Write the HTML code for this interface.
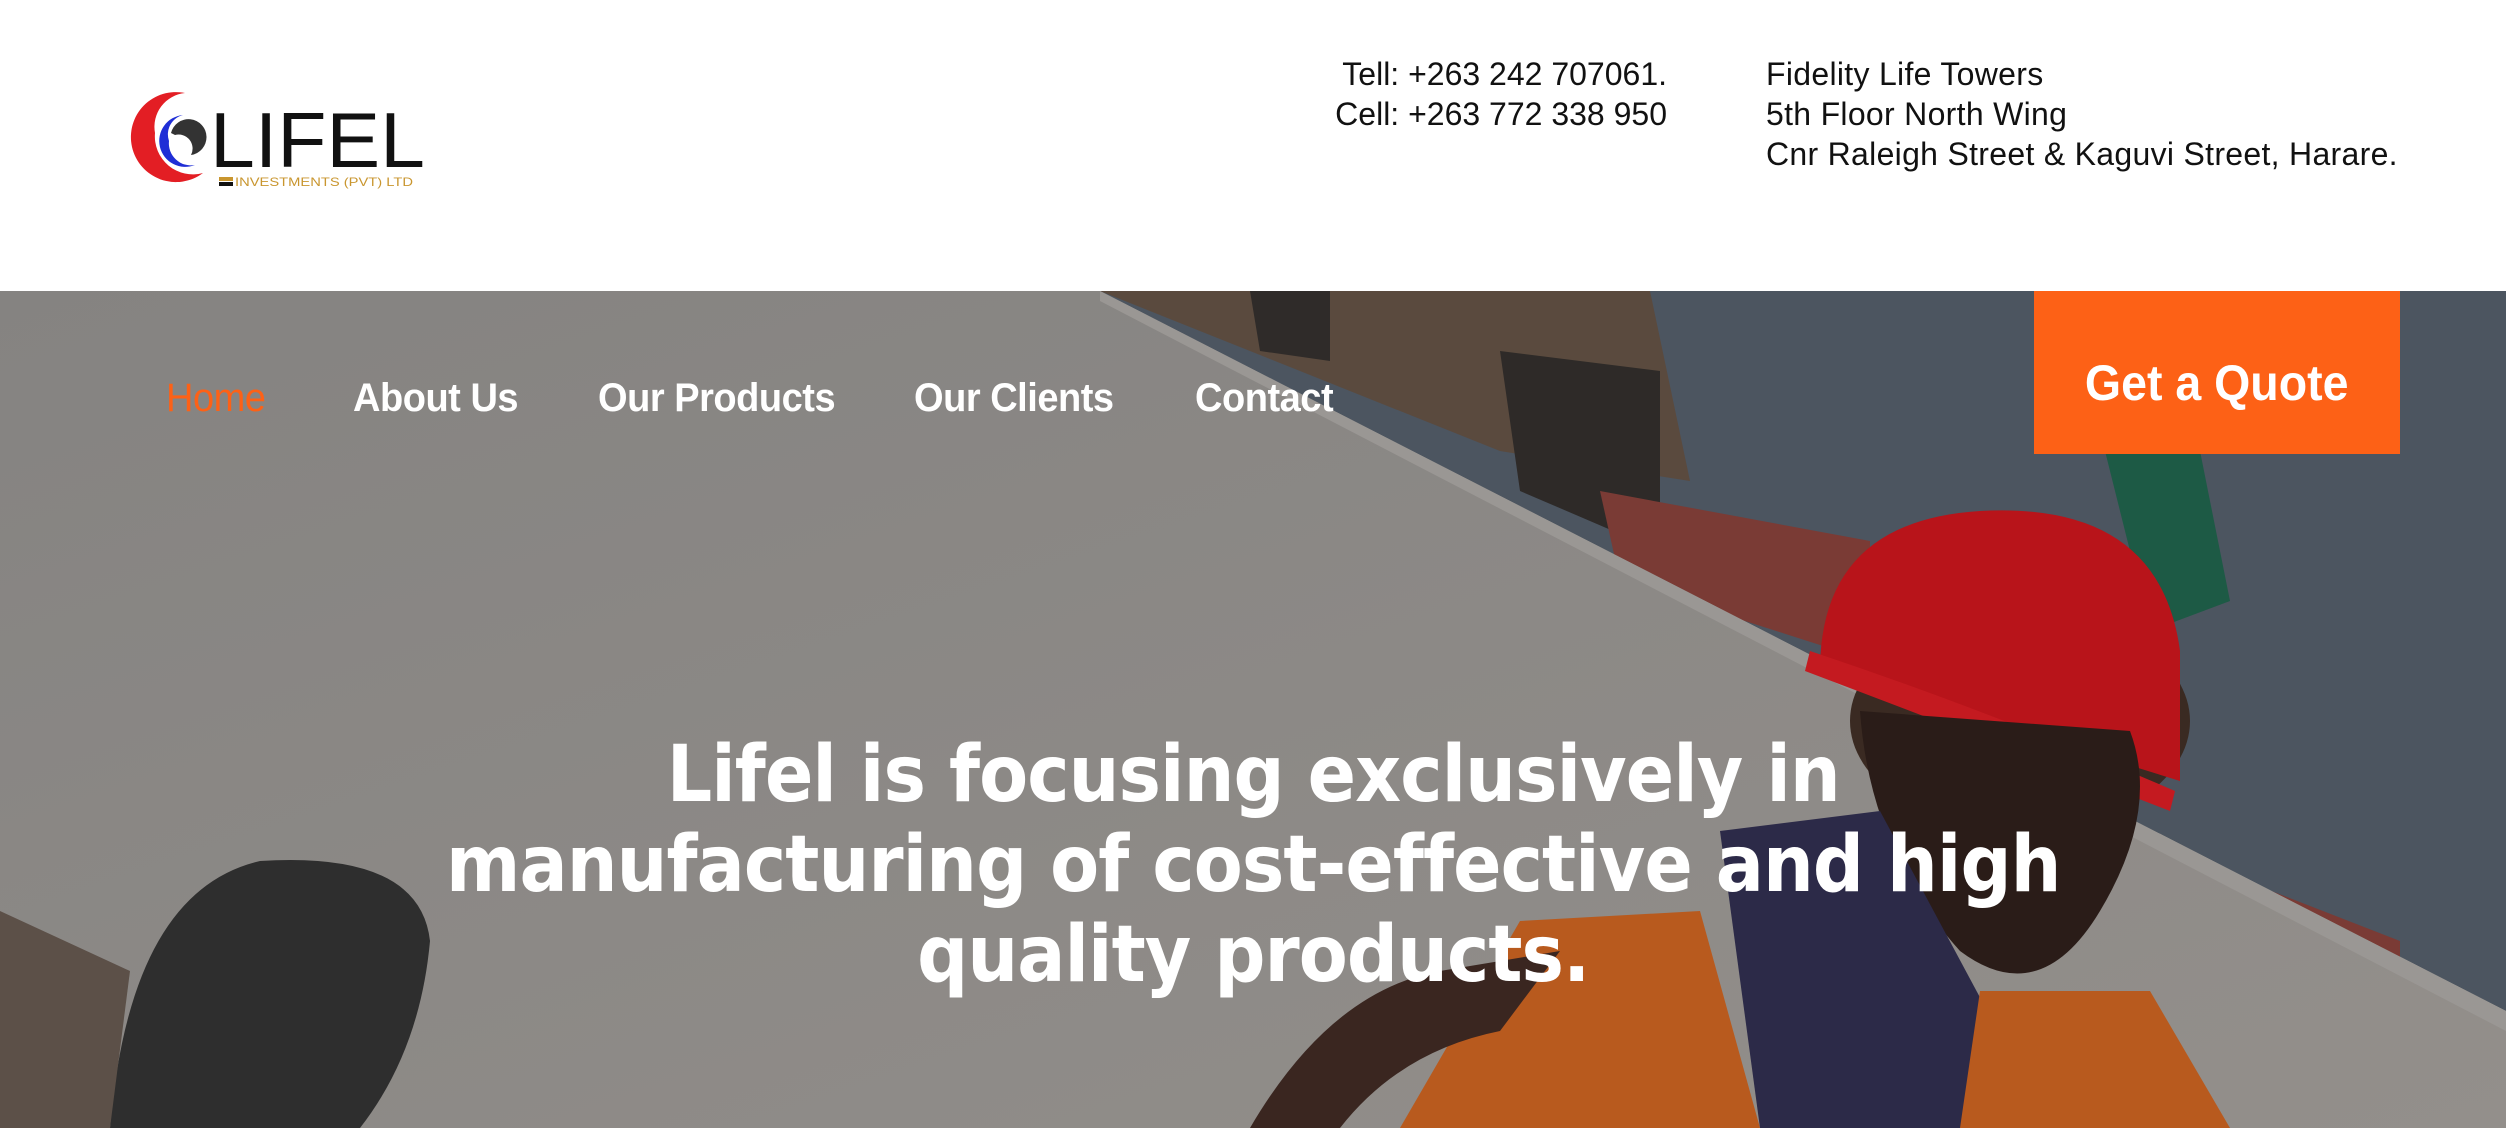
<!DOCTYPE html>
<html><head><meta charset="utf-8"><style>
*{margin:0;padding:0;box-sizing:border-box}
body{width:2506px;height:1128px;overflow:hidden;background:#fff;font-family:"Liberation Sans",sans-serif;position:relative}
.hdr{position:absolute;left:0;top:0;width:2506px;height:291px;background:#fff}
.c1{position:absolute;left:1200px;top:54px;width:467px;text-align:right;font-size:32px;line-height:40px;color:#111;white-space:nowrap}
.c2{position:absolute;left:1766px;top:54px;font-size:32px;line-height:40px;color:#111;white-space:nowrap;letter-spacing:0.3px}
.hero{position:absolute;left:0;top:291px;width:2506px;height:837px;overflow:hidden}
.nav a{position:absolute;top:376px;font-size:40px;font-weight:bold;color:#fff;text-decoration:none;white-space:nowrap;letter-spacing:-0.5px;transform:scaleX(0.95);transform-origin:left}
.btn{position:absolute;left:2034px;top:291px;width:366px;height:163px;background:#fd6116;color:#fff;font-weight:bold;font-size:50px;display:flex;align-items:center;justify-content:center;padding-top:20px}
.btn span{display:inline-block;transform:scaleX(0.93)}
h1{position:absolute;left:0;width:2506px;top:730px;text-align:center;color:#fff;font-size:78px;line-height:90px;font-family:"DejaVu Sans","Liberation Sans",sans-serif;font-weight:bold;letter-spacing:-1px}
h1 span{display:inline-block;transform:scaleX(0.915)}
</style></head><body>
<div class="hdr">
<svg style="position:absolute;left:125px;top:85px" width="310" height="110" viewBox="0 0 310 110">
<path d="M60 8 A45 45 0 1 0 78 88 A38 38 0 0 1 30 48 A34 34 0 0 1 60 8Z" fill="#e31e24"/>
<path d="M58 30 A26 26 0 1 0 70 80 A22 22 0 0 1 44 56 A20 20 0 0 1 58 30Z" fill="#1f2ed6"/>
<path d="M46 48 A18 18 0 1 1 66 70 A14 14 0 0 0 50 50Z" fill="#333"/>
<text x="85" y="82" font-family="Liberation Sans" font-size="78" fill="#111" textLength="215" lengthAdjust="spacingAndGlyphs">LIFEL</text>
<rect x="94" y="92" width="14" height="4" fill="#c9962f"/><rect x="94" y="97" width="14" height="4" fill="#111"/>
<text x="110" y="101" font-family="Liberation Sans" font-size="12" fill="#c9962f" textLength="178" lengthAdjust="spacingAndGlyphs">INVESTMENTS (PVT) LTD</text>
</svg>
<div class="c1">Tell: +263 242 707061.<br>Cell: +263 772 338 950</div>
<div class="c2">Fidelity Life Towers<br>5th Floor North Wing<br>Cnr Raleigh Street &amp; Kaguvi Street, Harare.</div>
</div>
<div class="hero">
<svg width="2506" height="837" viewBox="0 0 2506 837">
<defs><linearGradient id="w" x1="0" y1="0" x2="1" y2="1"><stop offset="0" stop-color="#858381"/><stop offset="1" stop-color="#938f8b"/></linearGradient></defs>
<rect width="2506" height="837" fill="url(#w)"/>
<polygon points="1100,0 2506,0 2506,720" fill="#4c5560"/>
<polygon points="1100,0 1650,0 1690,190 1500,160" fill="#5a4a3e"/>
<polygon points="1250,0 1330,0 1330,70 1260,60" fill="#2f2b29"/>
<polygon points="1500,60 1660,80 1660,260 1520,200" fill="#2e2a28"/>
<polygon points="1600,200 1870,250 1870,370 1620,290" fill="#7a3b35"/>
<polygon points="2220,580 2400,650 2400,700 2220,640" fill="#7a3b35"/>
<polygon points="1100,0 2506,720 2506,837 0,837 0,0" fill="url(#w)"/>
<polygon points="1100,0 2506,720 2506,740 1100,10" fill="#9a9794"/>
<polygon points="2100,140 2200,160 2230,310 2150,340" fill="#1d5a45"/>
<ellipse cx="2020" cy="430" rx="170" ry="110" fill="#3a2a22"/>
<path d="M1820 380 Q1820 230 1980 220 Q2160 210 2180 360 L2180 490 Q2020 440 1820 380Z" fill="#b8141a"/>
<path d="M1810 360 Q1990 420 2175 500 L2170 520 Q1990 450 1805 380Z" fill="#c41a20"/>
<path d="M1860 420 Q1870 560 1960 660 Q2040 720 2100 620 Q2160 520 2130 440Z" fill="#2a1c18"/>
<path d="M1720 540 L1880 520 L2050 837 L1760 837Z" fill="#2c2a48"/>
<path d="M1400 837 L1520 630 L1700 620 L1760 837Z" fill="#b85a1e"/>
<path d="M1980 700 L2150 700 L2230 837 L1960 837Z" fill="#b85a1e"/>
<path d="M1250 837 Q1330 700 1440 680 L1560 660 L1500 740 Q1400 760 1340 837Z" fill="#3a2620"/>
<path d="M110 837 Q130 600 260 570 Q420 560 430 650 Q420 760 360 837Z" fill="#2e2e2e"/>
<path d="M0 620 L130 680 L110 837 L0 837Z" fill="#5c5048"/>
</svg>
</div>
<div class="nav">
<a style="left:166px;color:#fd6116;font-weight:normal">Home</a>
<a style="left:353px">About Us</a>
<a style="left:598px">Our Products</a>
<a style="left:914px">Our Clients</a>
<a style="left:1195px">Contact</a>
</div>
<div class="btn"><span>Get a Quote</span></div>
<h1><span>Lifel is focusing exclusively in<br>manufacturing of cost-effective and high<br>quality products.</span></h1>
</body></html>
